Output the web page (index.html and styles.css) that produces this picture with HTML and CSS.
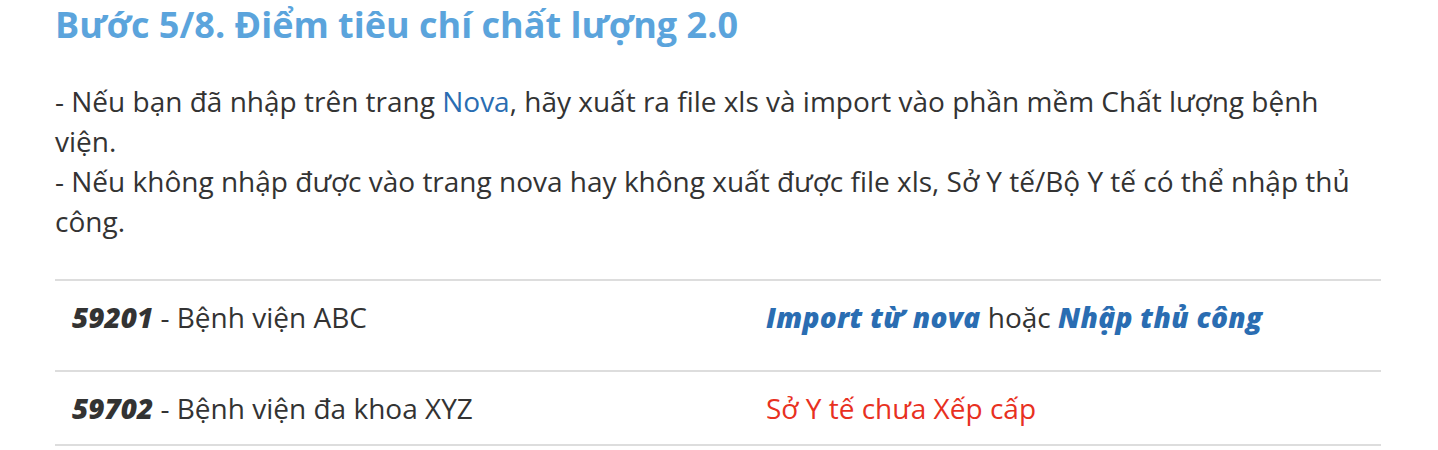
FILE: index.html
```html
<!DOCTYPE html>
<html lang="vi">
<head>
    <meta charset="UTF-8">
    <meta name="viewport" content="width=device-width, initial-scale=1.0">
    <title>Bước 5/8</title>
    <link rel="stylesheet" href="styles.css">
</head>
<body>
    <div class="container">
        <h2 class="step-title">Bước 5/8. Điểm tiêu chí chất lượng 2.0</h2>
        <div class="note">
            - Nếu bạn đã nhập trên trang <a href="#">Nova</a>, hãy xuất ra file xls và import vào phần mềm Chất lượng bệnh viện.<br>
            - Nếu không nhập được vào trang nova hay không xuất được file xls, Sở Y tế/Bộ Y tế có thể nhập thủ công.
        </div>
        <table class="hospital-table">
            <tr class="row-action">
                <td class="col-name"><b class="code">59201</b> - Bệnh viện ABC</td>
                <td class="col-status">
                    <a href="#" class="action">Import từ nova</a> hoặc <a href="#" class="action">Nhập thủ công</a>
                </td>
            </tr>
            <tr>
                <td class="col-name"><b class="code">59702</b> - Bệnh viện đa khoa XYZ</td>
                <td class="col-status"><span class="pending">Sở Y tế chưa Xếp cấp</span></td>
            </tr>
        </table>
    </div>
</body>
</html>
```

FILE: styles.css
```css
body {
    font-family: 'Open Sans', sans-serif;
    color: #333;
    margin: 0;
    padding: 0;
    background: white;
}
.container {
    width: 1326px;
    margin-left: 55px;
}
.step-title {
    color: #5ba4dc;
    font-size: 36px;
    font-weight: bold;
    margin: 0;
    line-height: 50px;
}
.note {
    font-size: 28px;
    line-height: 40px;
    margin-top: 31px;
    margin-bottom: 38px;
}
a {
    color: #2a6db2;
    text-decoration: none;
}
.hospital-table {
    width: 100%;
    border-collapse: collapse;
    font-size: 28px;
}
.hospital-table td {
    border-top: 2px solid #ddd;
    border-bottom: 2px solid #ddd;
    padding: 18px 17px;
    line-height: 36px;
    vertical-align: top;
}
.col-name {
    width: 660px;
}
.row-action td {
    padding-bottom: 35px;
}
.code {
    font-weight: 800;
    font-style: italic;
}
.action {
    font-weight: 800;
    font-style: italic;
    letter-spacing: 0.3px;
}
.pending {
    color: #e8311f;
}
```
